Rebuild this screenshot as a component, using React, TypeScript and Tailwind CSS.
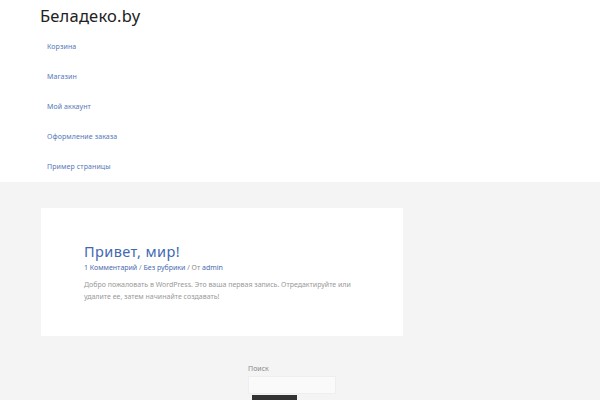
import React from 'react';

const navItems = ['Корзина', 'Магазин', 'Мой аккаунт', 'Оформление заказа', 'Пример страницы'];

const App: React.FC = () => {
    return (
        <div className="min-h-[400px] h-[400px] overflow-hidden bg-[#f4f4f4] font-['Noto_Sans',sans-serif]">
            <header className="bg-white px-[40px] pt-[5px] h-[182px]">
                <div className="text-[16.5px] leading-[22px] text-[#222] tracking-[0.2px]">Беладеко.by</div>
                <nav className="mt-[15px] pl-[7px]">
                    {navItems.map(item => (
                        <div key={item} className="h-[30px] text-[7px] leading-[10px] text-[#5577b8] tracking-[0.1px]">
                            {item}
                        </div>
                    ))}
                </nav>
            </header>

            <main className="px-[41px] pt-[26px]">
                <article className="w-[362px] h-[128px] bg-white pl-[43px] pt-[34px] pr-[40px]">
                    <h2 className="text-[14.5px] leading-[18px] text-[#4169b3] tracking-[0.4px]">Привет, мир!</h2>
                    <div className="mt-[3px] text-[7px] leading-[10px] text-[#8a8a8a]">
                        <span className="text-[#4a6cb0]">1 Комментарий</span> / <span className="text-[#4a6cb0]">Без рубрики</span> / От <span className="text-[#4a6cb0]">admin</span>
                    </div>
                    <p className="mt-[6px] text-[7px] leading-[12px] text-[#999]">
                        Добро пожаловать в WordPress. Это ваша первая запись. Отредактируйте или удалите ее, затем начинайте создавать!
                    </p>
                </article>
            </main>

            <aside className="pl-[248px] pt-[28px]">
                <div className="text-[7px] leading-[10px] text-[#8a8a8a]">Поиск</div>
                <div className="mt-[2px] w-[88px] h-[18px] bg-[#fafafa] border border-[#eee]" />
                <div className="mt-[1px] ml-[4px] w-[45px] h-[12px] bg-[#333]" />
            </aside>
        </div>
    );
};

export default App;
